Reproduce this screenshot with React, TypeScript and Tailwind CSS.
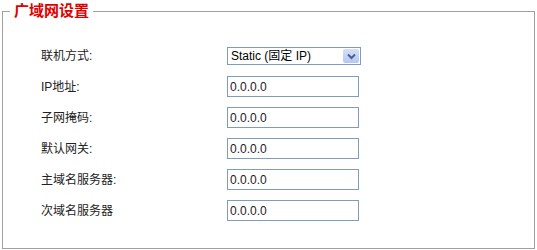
import React from 'react';

const rows = [
  { label: 'IP地址:', value: '0.0.0.0' },
  { label: '子网掩码:', value: '0.0.0.0' },
  { label: '默认网关:', value: '0.0.0.0' },
  { label: '主域名服务器:', value: '0.0.0.0' },
  { label: '次域名服务器', value: '0.0.0.0' },
];

const font = { fontFamily: '"Liberation Sans", "Noto Sans CJK SC", sans-serif' };

const App: React.FC = () => {
  return (
    <div className="w-[537px] h-[250px] bg-white" style={font}>
      <fieldset className="mx-[2px] h-[249px] border border-[#a0a0a0]">
        <legend className="ml-[7px] px-[4px] h-[22px] leading-[22px] text-[15px] font-bold text-[#e00000]">
          广域网设置
        </legend>

        <div className="pt-[19px] pl-[38px]">
          {/* connection type */}
          <div className="flex items-center h-[30px]">
            <span className="w-[186px] text-[12px] text-[#222]">联机方式:</span>
            <div className="flex items-center w-[134px] h-[18px] border border-[#7f9db9] bg-white">
              <span className="flex-1 pl-[3px] text-[12px] leading-none text-black">Static (固定 IP)</span>
              <div className="flex items-center justify-center w-[16px] h-[14px] mr-[1px] rounded-[2px] bg-gradient-to-b from-[#d4e0fb] to-[#b3c8f4]">
                <svg width="9" height="7" viewBox="0 0 9 7">
                  <path d="M1 1.5 L4.5 5 L8 1.5" fill="none" stroke="#4d6185" strokeWidth="2" />
                </svg>
              </div>
            </div>
          </div>

          {rows.map((r) => (
            <div key={r.label} className="flex items-center h-[31px]">
              <span className="w-[186px] text-[12px] text-[#222]">{r.label}</span>
              <div className="flex items-center w-[132px] h-[21px] border border-[#7f9db9] bg-white pl-[2px] text-[12px] text-[#222]">
                {r.value}
              </div>
            </div>
          ))}
        </div>
      </fieldset>
    </div>
  );
};

export default App;
